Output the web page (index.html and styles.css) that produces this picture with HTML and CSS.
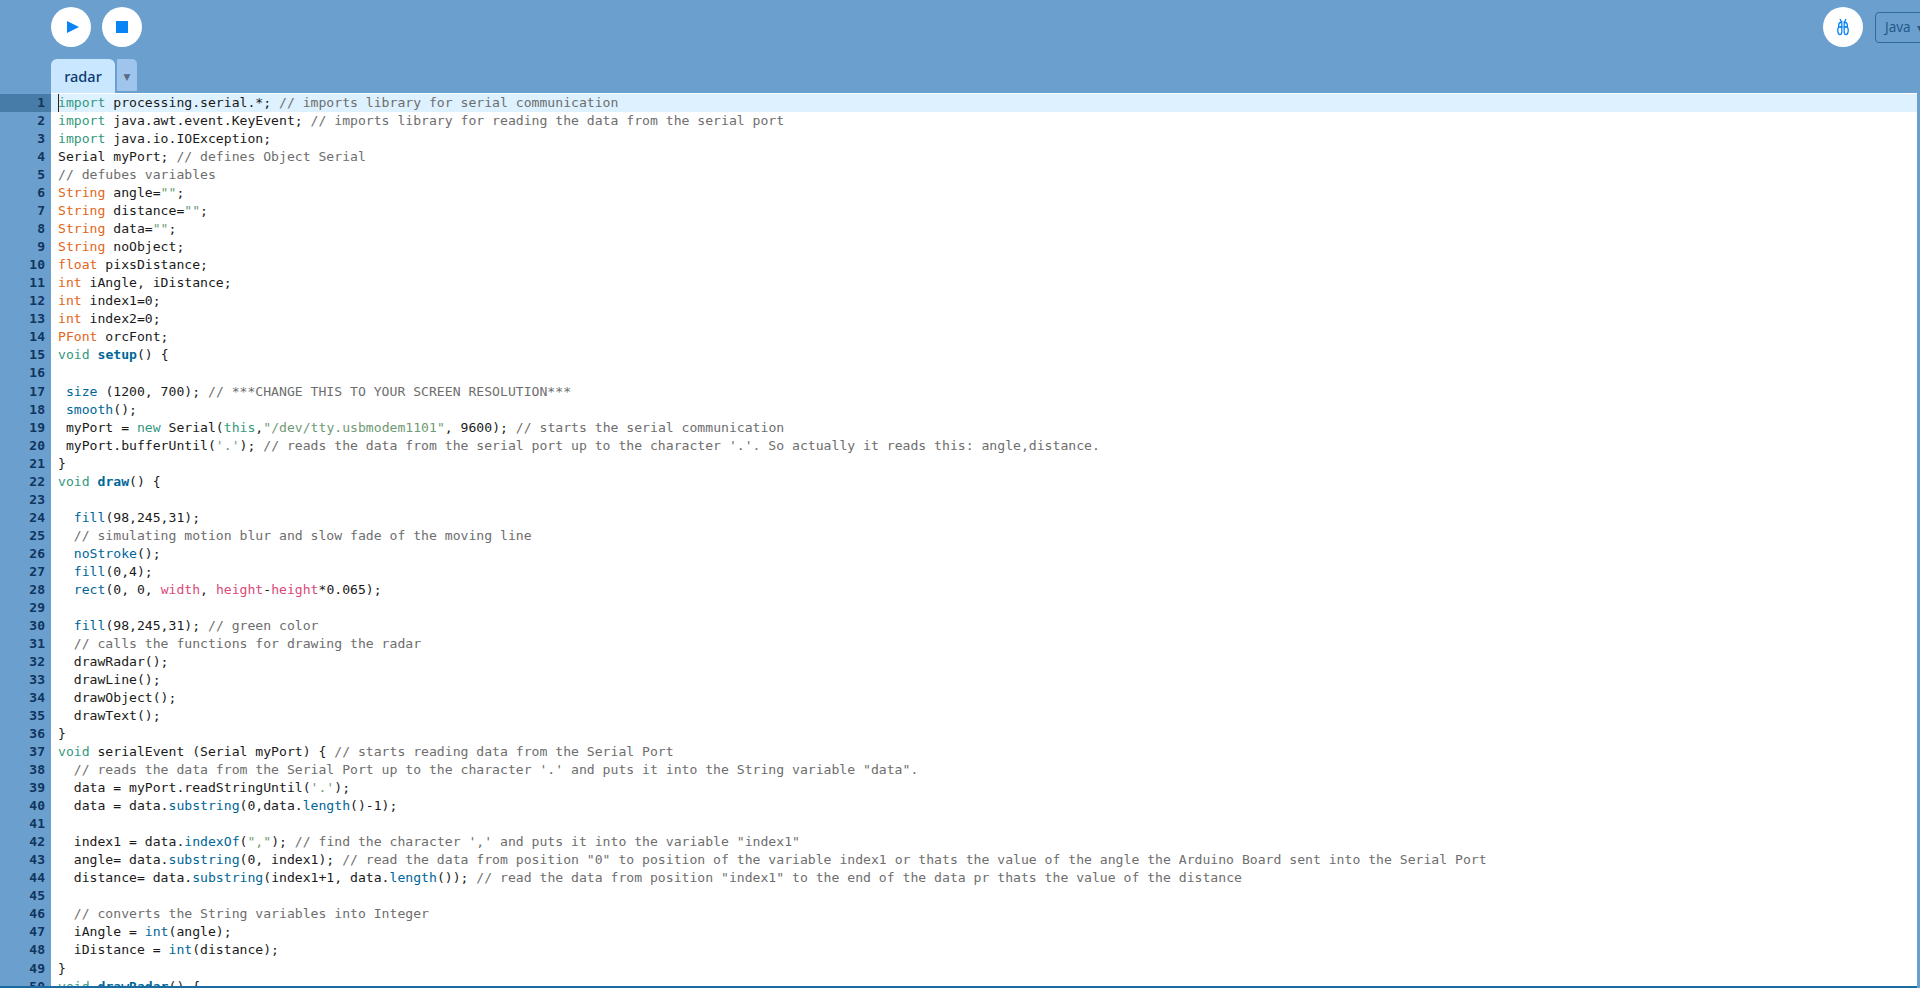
FILE: index.html
```html
<!DOCTYPE html>
<html lang="en">
<head>
<meta charset="utf-8">
<title>radar</title>
<link rel="stylesheet" href="styles.css">
</head>
<body>
<header class="header">
  <div class="toolbar">
    <div class="tool-group">
      <button class="round"><svg class="play-icon" width="14" height="14" viewBox="0 0 14 14"><path d="M1 1 13 7 1 13z" fill="#0a84f5"/></svg></button>
      <button class="round"><svg width="14" height="14" viewBox="0 0 14 14"><rect x="1" y="1" width="12" height="12" fill="#0a84f5"/></svg></button>
    </div>
    <div class="tool-right">
      <button class="round"><svg width="18" height="18" viewBox="0 0 18 18" fill="none" stroke="#0a84f5" stroke-width="1.3"><path d="M6 1 7.6 4M12 1 10.4 4"/><path d="M7.8 4C5 4.4 4.4 6 4.6 8.6L7.8 9z"/><path d="M7.8 9 4.6 9.2C3.2 11 3.6 16.6 6 16.6c1.6 0 1.8-1.6 1.8-3z"/><path d="M10.2 4C13 4.4 13.6 6 13.4 8.6L10.2 9z"/><path d="M10.2 9 13.4 9.2C14.8 11 14.4 16.6 12 16.6c-1.6 0-1.8-1.6-1.8-3z"/></svg></button>
      <div class="mode">Java <span class="caret">▾</span></div>
    </div>
  </div>
  <nav class="tabs">
    <div class="tab">radar</div>
    <div class="tab-menu"><span class="tab-arrow">▼</span></div>
  </nav>
</header>
<main class="editor">
<div class="row active"><div class="num">1</div><div class="code"><span class="caretline"></span><span class="k">import</span> processing.serial.*; <span class="c">// imports library for serial communication</span></div></div>
<div class="row"><div class="num">2</div><div class="code"><span class="k">import</span> java.awt.event.KeyEvent; <span class="c">// imports library for reading the data from the serial port</span></div></div>
<div class="row"><div class="num">3</div><div class="code"><span class="k">import</span> java.io.IOException;</div></div>
<div class="row"><div class="num">4</div><div class="code">Serial myPort; <span class="c">// defines Object Serial</span></div></div>
<div class="row"><div class="num">5</div><div class="code"><span class="c">// defubes variables</span></div></div>
<div class="row"><div class="num">6</div><div class="code"><span class="t">String</span> angle=<span class="s">""</span>;</div></div>
<div class="row"><div class="num">7</div><div class="code"><span class="t">String</span> distance=<span class="s">""</span>;</div></div>
<div class="row"><div class="num">8</div><div class="code"><span class="t">String</span> data=<span class="s">""</span>;</div></div>
<div class="row"><div class="num">9</div><div class="code"><span class="t">String</span> noObject;</div></div>
<div class="row"><div class="num">10</div><div class="code"><span class="t">float</span> pixsDistance;</div></div>
<div class="row"><div class="num">11</div><div class="code"><span class="t">int</span> iAngle, iDistance;</div></div>
<div class="row"><div class="num">12</div><div class="code"><span class="t">int</span> index1=0;</div></div>
<div class="row"><div class="num">13</div><div class="code"><span class="t">int</span> index2=0;</div></div>
<div class="row"><div class="num">14</div><div class="code"><span class="t">PFont</span> orcFont;</div></div>
<div class="row"><div class="num">15</div><div class="code"><span class="k">void</span> <span class="b">setup</span>() {</div></div>
<div class="row"><div class="num">16</div><div class="code"></div></div>
<div class="row"><div class="num">17</div><div class="code"> <span class="f">size</span> (1200, 700); <span class="c">// ***CHANGE THIS TO YOUR SCREEN RESOLUTION***</span></div></div>
<div class="row"><div class="num">18</div><div class="code"> <span class="f">smooth</span>();</div></div>
<div class="row"><div class="num">19</div><div class="code"> myPort = <span class="k">new</span> Serial(<span class="k">this</span>,<span class="s">"/dev/tty.usbmodem1101"</span>, 9600); <span class="c">// starts the serial communication</span></div></div>
<div class="row"><div class="num">20</div><div class="code"> myPort.bufferUntil(<span class="s">'.'</span>); <span class="c">// reads the data from the serial port up to the character '.'. So actually it reads this: angle,distance.</span></div></div>
<div class="row"><div class="num">21</div><div class="code">}</div></div>
<div class="row"><div class="num">22</div><div class="code"><span class="k">void</span> <span class="b">draw</span>() {</div></div>
<div class="row"><div class="num">23</div><div class="code"></div></div>
<div class="row"><div class="num">24</div><div class="code">  <span class="f">fill</span>(98,245,31);</div></div>
<div class="row"><div class="num">25</div><div class="code">  <span class="c">// simulating motion blur and slow fade of the moving line</span></div></div>
<div class="row"><div class="num">26</div><div class="code">  <span class="f">noStroke</span>();</div></div>
<div class="row"><div class="num">27</div><div class="code">  <span class="f">fill</span>(0,4);</div></div>
<div class="row"><div class="num">28</div><div class="code">  <span class="f">rect</span>(0, 0, <span class="v">width</span>, <span class="v">height</span>-<span class="v">height</span>*0.065);</div></div>
<div class="row"><div class="num">29</div><div class="code"></div></div>
<div class="row"><div class="num">30</div><div class="code">  <span class="f">fill</span>(98,245,31); <span class="c">// green color</span></div></div>
<div class="row"><div class="num">31</div><div class="code">  <span class="c">// calls the functions for drawing the radar</span></div></div>
<div class="row"><div class="num">32</div><div class="code">  drawRadar();</div></div>
<div class="row"><div class="num">33</div><div class="code">  drawLine();</div></div>
<div class="row"><div class="num">34</div><div class="code">  drawObject();</div></div>
<div class="row"><div class="num">35</div><div class="code">  drawText();</div></div>
<div class="row"><div class="num">36</div><div class="code">}</div></div>
<div class="row"><div class="num">37</div><div class="code"><span class="k">void</span> serialEvent (Serial myPort) { <span class="c">// starts reading data from the Serial Port</span></div></div>
<div class="row"><div class="num">38</div><div class="code">  <span class="c">// reads the data from the Serial Port up to the character '.' and puts it into the String variable "data".</span></div></div>
<div class="row"><div class="num">39</div><div class="code">  data = myPort.readStringUntil(<span class="s">'.'</span>);</div></div>
<div class="row"><div class="num">40</div><div class="code">  data = data.<span class="f">substring</span>(0,data.<span class="f">length</span>()-1);</div></div>
<div class="row"><div class="num">41</div><div class="code"></div></div>
<div class="row"><div class="num">42</div><div class="code">  index1 = data.<span class="f">indexOf</span>(<span class="s">","</span>); <span class="c">// find the character ',' and puts it into the variable "index1"</span></div></div>
<div class="row"><div class="num">43</div><div class="code">  angle= data.<span class="f">substring</span>(0, index1); <span class="c">// read the data from position "0" to position of the variable index1 or thats the value of the angle the Arduino Board sent into the Serial Port</span></div></div>
<div class="row"><div class="num">44</div><div class="code">  distance= data.<span class="f">substring</span>(index1+1, data.<span class="f">length</span>()); <span class="c">// read the data from position "index1" to the end of the data pr thats the value of the distance</span></div></div>
<div class="row"><div class="num">45</div><div class="code"></div></div>
<div class="row"><div class="num">46</div><div class="code">  <span class="c">// converts the String variables into Integer</span></div></div>
<div class="row"><div class="num">47</div><div class="code">  iAngle = <span class="f">int</span>(angle);</div></div>
<div class="row"><div class="num">48</div><div class="code">  iDistance = <span class="f">int</span>(distance);</div></div>
<div class="row"><div class="num">49</div><div class="code">}</div></div>
<div class="row"><div class="num">50</div><div class="code"><span class="k">void</span> <span class="b">drawRadar</span>() {</div></div>
</main>
</body>
</html>
```
FILE: styles.css
```css
* { box-sizing: border-box; }
html, body { margin: 0; height: 100%; }
body {
  display: flex;
  flex-direction: column;
  height: 988px;
  overflow: hidden;
  background: #6b9fce;
  font-family: "DejaVu Sans Mono", monospace;
}
.header { height: 93px; flex: none; display: flex; flex-direction: column; }
.toolbar { height: 59px; display: flex; justify-content: space-between; padding: 7px 0 0 51px; }
.tool-group { display: flex; gap: 11px; }
.tool-right { display: flex; gap: 12px; }
.round {
  width: 40px; height: 40px; border: 0; border-radius: 50%; padding: 0;
  background: #fff; display: flex; align-items: center; justify-content: center;
}
.play-icon { margin-left: 3px; }
.mode {
  width: 60px; height: 31px; margin-top: 5px; margin-right: -15px;
  border: 1px solid #2f6a9c; border-radius: 4px; padding-left: 9px;
  font: 13.5px/29px "Noto Sans", "Open Sans", sans-serif; color: #1f5a8a;
  white-space: nowrap;
}
.caret { font-size: 12px; color: #1f5a8a; margin-left: 3px; }
.tabs { display: flex; gap: 2px; padding-left: 51px; height: 34px; align-items: flex-start; }
.tab {
  width: 64px; height: 34px; background: #c9e8ff; border-radius: 6px 6px 0 0;
  text-align: center; font: 500 14.5px/34px "Noto Sans", "Open Sans", sans-serif; color: #0d3a70;
}
.tab-menu {
  width: 20px; height: 32px; background: #a0c5ec; border-radius: 0 5px 0 0;
  text-align: center; line-height: 32px;
}
.tab-arrow { font-size: 9px; color: #566c85; font-family: "DejaVu Sans", sans-serif; }
.editor {
  flex: 1; min-height: 0; overflow: hidden;
  margin-right: 3px; padding-top: 1px;
  border-bottom: 2px solid #1a6ba0;
  background: linear-gradient(to right, #6b9fce 51px, #fff 51px);
}
.row { display: flex; height: 18.04px; }
.row.active { background: linear-gradient(to right, #467ca7 51px, #ddf1ff 51px); }
.num {
  flex: none; width: 51px; padding: 0 6px 0 0; text-align: right;
  font: 700 13px/18px "DejaVu Sans Mono", monospace; color: #10355e;
}
.code {
  padding: 0 0 0 7px; white-space: pre; position: relative;
  font-size: 13.12px; line-height: 18px; color: #1a1a1a;
}
.caretline { position: absolute; left: 7px; top: 0; width: 1px; height: 18px; background: #222; }
.k { color: #33997e; }
.t { color: #e2661a; }
.c { color: #6e6e6e; }
.f { color: #006699; }
.b { color: #006699; font-weight: 700; }
.s { color: #6f9a75; }
.v { color: #d94a7a; }
```
